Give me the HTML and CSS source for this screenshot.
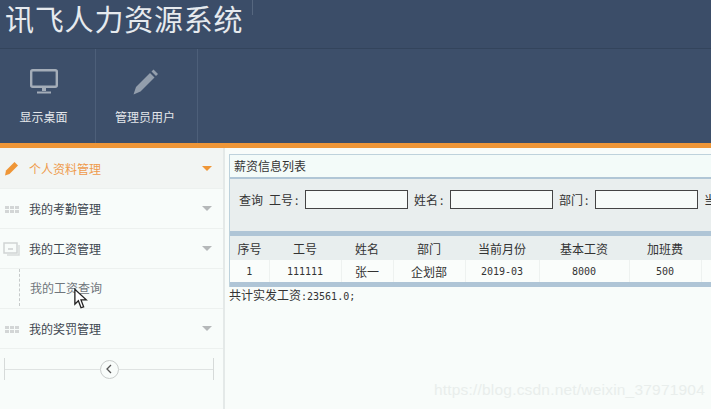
FILE: index.html
```html
<!DOCTYPE html>
<html lang="zh">
<head>
  <meta charset="UTF-8" />
  <title>讯飞人力资源系统</title>
  <link rel="stylesheet" href="styles.css">
</head>
<body>
  <div class="page">
    <header class="top">
      <div class="brand">
        <h1 class="brand-text">讯飞人力资源系统</h1>
        <span class="brand-mark"></span>
      </div>
      <nav class="tools">
        <a class="tool tool-first">
          <svg class="tool-icon" width="28" height="26" viewBox="0 0 28 26">
            <rect x="1.2" y="1.2" width="25.600" height="16.600" rx="1.500" fill="none" stroke="#a4adb8" stroke-width="2.400"/>
            <path d="M12 19h4v3h-4z" fill="#a4adb8"/>
            <path d="M7 22.500h14v2H7z" fill="#a4adb8"/>
          </svg>
          <span>显示桌面</span>
        </a>
        <a class="tool tool-second">
          <svg class="tool-icon" width="28" height="26" viewBox="0 0 28 26">
            <path d="M5 18 19 4l4.500 4.500L9.500 22.500l-7 3z" fill="#939eac"/>
            <path d="M20.500 2.500 22.500.5 27 5l-2 2z" fill="#939eac"/>
          </svg>
          <span>管理员用户</span>
        </a>
      </nav>
    </header>

    <div class="content">
      <aside class="side">
        <div class="menu-item active">
          <svg class="menu-icon" width="16" height="16" viewBox="0 0 16 16">
            <path d="M2 10.500 10.500 2l3.500 3.500L5.500 14 1 15.500z" fill="#ef9637"/>
          </svg>
          <span class="menu-label">个人资料管理</span>
          <i class="caret"></i>
        </div>
        <div class="menu-item">
          <svg class="menu-icon" width="16" height="16" viewBox="0 0 16 16">
            <path d="M1 5h4v3H1zM6 5h4v3H6zM11 5h4v3h-4zM1 9h4v3H1zM6 9h4v3H6zM11 9h4v3h-4z" fill="#d3d6d6"/>
          </svg>
          <span class="menu-label">我的考勤管理</span>
          <i class="caret"></i>
        </div>
        <div class="menu-item">
          <svg class="menu-icon" width="18" height="16" viewBox="0 0 18 16">
            <rect x="1" y="2" width="13" height="10" fill="none" stroke="#d0d4d4" stroke-width="1.500"/>
            <path d="M5 7h5v2H5z" fill="#d8dbdb"/>
            <path d="M16 4v10H4" fill="none" stroke="#d8dbdb" stroke-width="1.500"/>
          </svg>
          <span class="menu-label">我的工资管理</span>
          <i class="caret"></i>
        </div>
        <div class="sub-item">
          <span class="sub-label">我的工资查询</span>
          <svg class="cursor" width="14" height="22" viewBox="0 0 16 24">
            <path d="M1 1v17l4-4 3 8 3-1-3-8h6z" fill="#fff" stroke="#222" stroke-width="1.500"/>
          </svg>
        </div>
        <div class="menu-item">
          <svg class="menu-icon" width="16" height="16" viewBox="0 0 16 16">
            <path d="M1 5h4v3H1zM6 5h4v3H6zM11 5h4v3h-4zM1 9h4v3H1zM6 9h4v3H6zM11 9h4v3h-4z" fill="#d3d6d6"/>
          </svg>
          <span class="menu-label">我的奖罚管理</span>
          <i class="caret"></i>
        </div>
        <div class="collapse">
          <span class="collapse-line"></span>
          <span class="collapse-btn">
            <svg width="8" height="10" viewBox="0 0 8 10"><path d="M6 1 2 5l4 4" fill="none" stroke="#555" stroke-width="1.300"/></svg>
          </span>
          <span class="collapse-line"></span>
        </div>
      </aside>

      <main class="main">
        <section class="panel">
          <div class="panel-title">薪资信息列表</div>
          <form class="search">
            <span class="search-lead">查询</span>
            <label>工号<b>:</b></label><input class="field" type="text">
            <label>姓名<b>:</b></label><input class="field" type="text">
            <label>部门<b>:</b></label><input class="field" type="text">
            <label>当前月份<b>:</b></label>
          </form>
          <table class="grid">
            <thead>
              <tr>
                <th class="c-no">序号</th>
                <th class="c-id">工号</th>
                <th class="c-name">姓名</th>
                <th class="c-dept">部门</th>
                <th class="c-month">当前月份</th>
                <th class="c-base">基本工资</th>
                <th class="c-extra">加班费</th>
                <th></th>
              </tr>
            </thead>
            <tbody>
              <tr>
                <td class="num">1</td>
                <td class="num">111111</td>
                <td>张一</td>
                <td>企划部</td>
                <td class="num">2019-03</td>
                <td class="num">8000</td>
                <td class="num">500</td>
                <td></td>
              </tr>
            </tbody>
          </table>
        </section>
        <p class="total">共计实发工资<span class="num">:23561.0;</span></p>
      </main>
    </div>

    <div class="watermark">https://blog.csdn.net/weixin_37971904</div>
  </div>
</body>
</html>
```

FILE: styles.css
```css
html, body {
  margin: 0;
  height: 100%;
  overflow: hidden;
  background: #fff;
}

.page {
  position: relative;
  width: 711px;
  height: 409px;
  overflow: hidden;
  background: #f8fcfa;
  font-family: "Noto Sans CJK SC", "Liberation Sans", sans-serif;
  color: #333;
}

.top {
  background: #3c4f6b;
  border-bottom: 5px solid #ef9637;
}

.brand {
  display: flex;
  align-items: flex-start;
  height: 48px;
  padding-left: 5px;
  border-bottom: 1px solid #33445c;
  background: #3b4d68;
}

.brand-text {
  margin: 0;
  font-size: 29px;
  font-weight: 400;
  line-height: 37px;
  letter-spacing: 0.8px;
  color: #e6eaee;
}

.brand-mark {
  width: 1px;
  height: 15px;
  margin-left: 9px;
  background: #56677f;
}

.tools {
  display: flex;
  height: 94px;
  background: #3d4f6a;
}

.tool {
  display: flex;
  flex-direction: column;
  align-items: center;
  box-sizing: border-box;
  padding-top: 20px;
  border-right: 1px solid #4d5f79;
  color: #e4e7eb;
  font-size: 12px;
}

.tool-first {
  width: 96px;
  padding-right: 8px;
}

.tool-second {
  width: 102px;
  padding-right: 3px;
}

.tool-icon {
  display: block;
  margin-bottom: 13px;
}

.content {
  display: flex;
  height: 261px;
}

.side {
  width: 225px;
  flex: none;
  box-sizing: border-box;
  border-right: 2px solid #e4e9e8;
  background: #f8fcfa;
}

.menu-item {
  display: flex;
  align-items: center;
  height: 40px;
  box-sizing: border-box;
  border-bottom: 1px solid #edf1ef;
  padding: 0 11px 0 3px;
  font-size: 12px;
  color: #3d4650;
}

.menu-item.active {
  height: 41px;
  background: #f2f5f3;
  color: #ef9b4c;
}

.menu-icon {
  flex: none;
  width: 18px;
}

.menu-label {
  flex: 1;
  margin-left: 8px;
}

.caret {
  width: 0;
  height: 0;
  border-left: 5px solid transparent;
  border-right: 5px solid transparent;
  border-top: 5px solid #b5b8b9;
}

.active .caret {
  border-top-color: #ef9637;
}

.sub-item {
  position: relative;
  height: 40px;
  box-sizing: border-box;
  border-bottom: 1px solid #edf1ef;
  font-size: 12px;
  line-height: 38px;
  color: #70767c;
  padding-left: 30px;
}

.sub-item::before {
  content: "";
  position: absolute;
  left: 19px;
  top: 0;
  bottom: 2px;
  border-left: 1px dashed #c6caca;
}

.cursor {
  position: absolute;
  left: 74px;
  top: 19px;
}

.collapse {
  display: flex;
  align-items: center;
  height: 22px;
  margin: 9px 9px 0 4px;
  border-left: 1px solid #d6dad9;
  border-right: 1px solid #d6dad9;
  box-sizing: border-box;
}

.collapse-line {
  flex: 1;
  border-top: 1px solid #dfe3e2;
}

.collapse-btn {
  display: flex;
  align-items: center;
  justify-content: center;
  width: 17px;
  height: 17px;
  border: 1px solid #c9cdcc;
  border-radius: 50%;
  background: #f8fcfa;
}

.main {
  flex: 1;
  min-width: 0;
  padding: 6px 0 0 4px;
  overflow: hidden;
}

.panel {
  border: 1px solid #bed2dc;
  border-right: 0;
  border-bottom: 0;
}

.panel-title {
  height: 22px;
  padding-left: 4px;
  font-size: 12px;
  line-height: 22px;
  color: #333;
  background: #f3fbf9;
  border-bottom: 2px solid #b0c6d6;
}

.search {
  display: flex;
  align-items: flex-start;
  height: 52px;
  padding: 11px 0 0 9px;
  box-sizing: border-box;
  background: #e9eeee;
  font-size: 12px;
  white-space: nowrap;
}

.search label,
.search-lead {
  line-height: 19px;
}

.search label {
  flex: none;
  width: 36px;
}

.search label b {
  margin-left: 2px;
  font-weight: 400;
}

.search-lead {
  margin-right: 6px;
}

.field {
  flex: none;
  width: 103px;
  height: 19px;
  box-sizing: border-box;
  margin: 0 6px 0 0;
  padding: 0;
  border: 1px solid #444;
  background: #f7fbf9;
}

.grid {
  width: 600px;
  border-collapse: collapse;
  table-layout: fixed;
  border-top: 5px solid #afc5d6;
  border-bottom: 5px solid #afc5d6;
  font-size: 12px;
  text-align: center;
}

.grid th {
  height: 24px;
  padding: 0;
  font-weight: 400;
  background: #e8eeee;
}

.grid td {
  height: 22px;
  padding: 0;
  border-right: 1px solid #eef2f0;
  background: #fafdfb;
}

.num {
  font-family: "DejaVu Sans Mono", monospace;
  font-size: 10px;
}

.c-no { width: 39px; }
.c-id { width: 72px; }
.c-name { width: 52px; }
.c-dept { width: 72px; }
.c-month { width: 74px; }
.c-base { width: 90px; }
.c-extra { width: 72px; }

.total {
  margin: 0;
  font-size: 12px;
  line-height: 16px;
  color: #333;
  white-space: nowrap;
}

.watermark {
  position: absolute;
  right: 6px;
  bottom: 10px;
  font-family: "Liberation Sans", sans-serif;
  font-size: 15.500px;
  letter-spacing: 0.2px;
  color: #e9eeec;
}
```
